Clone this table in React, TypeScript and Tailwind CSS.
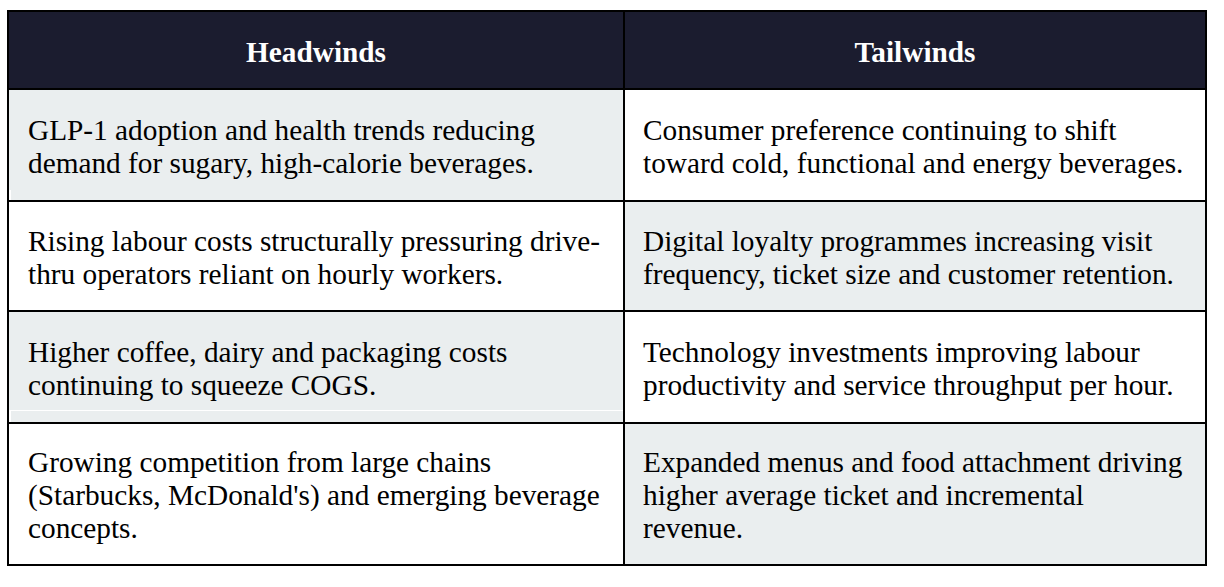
import React from "react";

const grey = "bg-[#eaeeef]";

function Lines({ lines }: { lines: string[] }) {
  return (
    <div className="whitespace-nowrap">
      {lines.map((l, i) => (
        <div key={i}>{l}</div>
      ))}
    </div>
  );
}

export default function App() {
  return (
    <div
      className="min-h-screen bg-white pt-[10px] pl-[7px] text-black"
      style={{ fontFamily: '"Liberation Serif", "Times New Roman", serif' }}
    >
      <div className="grid w-[1200px] grid-cols-[614px_580px] grid-rows-[76px_110px_108px_110px_140px] gap-[2px] border-2 border-black bg-black text-[29.3px] leading-[33px]">
        {/* Header */}
        <div className="flex items-center justify-center bg-[#1b1c2f] pt-[5px] font-bold text-white">
          Headwinds
        </div>
        <div className="flex items-center justify-center bg-[#1b1c2f] pt-[5px] font-bold text-white">
          Tailwinds
        </div>

        {/* Row 1 */}
        <div className={`flex flex-col ${grey}`}>
          <div className="flex flex-1 items-center pl-[19px] pt-[13px]">
            <Lines
              lines={[
                "GLP-1 adoption and health trends reducing",
                "demand for sugary, high-calorie beverages.",
              ]}
            />
          </div>
          <div className="h-[10px] border-l-2 border-white" />
        </div>
        <div className="flex items-center bg-white pl-[18px] pt-[3px]">
          <Lines
            lines={[
              "Consumer preference continuing to shift",
              "toward cold, functional and energy beverages.",
            ]}
          />
        </div>

        {/* Row 2 */}
        <div className="flex items-center bg-white pl-[19px] pt-[3px]">
          <Lines
            lines={[
              "Rising labour costs structurally pressuring drive-",
              "thru operators reliant on hourly workers.",
            ]}
          />
        </div>
        <div className={`flex items-center pl-[18px] pt-[3px] ${grey}`}>
          <Lines
            lines={[
              "Digital loyalty programmes increasing visit",
              "frequency, ticket size and customer retention.",
            ]}
          />
        </div>

        {/* Row 3 */}
        <div className={`flex flex-col ${grey}`}>
          <div className="flex flex-1 items-center pl-[19px] pt-[15px]">
            <Lines
              lines={[
                "Higher coffee, dairy and packaging costs",
                "continuing to squeeze COGS.",
              ]}
            />
          </div>
          <div className="h-[12px] border-t border-l-2 border-white" />
        </div>
        <div className="flex items-center bg-white pl-[18px] pt-[3px]">
          <Lines
            lines={[
              "Technology investments improving labour",
              "productivity and service throughput per hour.",
            ]}
          />
        </div>

        {/* Row 4 */}
        <div className="flex items-center bg-white pl-[19px] pt-[3px]">
          <Lines
            lines={[
              "Growing competition from large chains",
              "(Starbucks, McDonald's) and emerging beverage",
              "concepts.",
            ]}
          />
        </div>
        <div className={`flex items-center pl-[18px] pt-[3px] ${grey}`}>
          <Lines
            lines={[
              "Expanded menus and food attachment driving",
              "higher average ticket and incremental",
              "revenue.",
            ]}
          />
        </div>
      </div>
    </div>
  );
}
